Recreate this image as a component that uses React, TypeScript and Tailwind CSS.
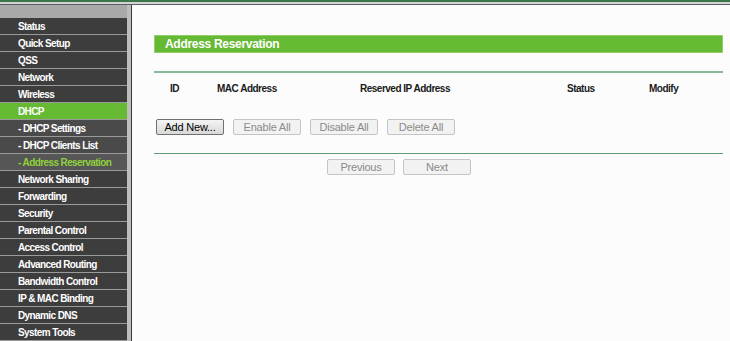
import React from "react";

type MenuItem = { label: string; kind?: "main" | "active" | "sub" | "subActive" };

const MENU: MenuItem[] = [
  { label: "Status" },
  { label: "Quick Setup" },
  { label: "QSS" },
  { label: "Network" },
  { label: "Wireless" },
  { label: "DHCP", kind: "active" },
  { label: "- DHCP Settings", kind: "sub" },
  { label: "- DHCP Clients List", kind: "sub" },
  { label: "- Address Reservation", kind: "subActive" },
  { label: "Network Sharing" },
  { label: "Forwarding" },
  { label: "Security" },
  { label: "Parental Control" },
  { label: "Access Control" },
  { label: "Advanced Routing" },
  { label: "Bandwidth Control" },
  { label: "IP & MAC Binding" },
  { label: "Dynamic DNS" },
  { label: "System Tools" },
];

const ITEM_STYLES: Record<NonNullable<MenuItem["kind"]>, string> = {
  main: "bg-[#3d3d3d] text-white",
  active: "bg-[#66b933] text-white",
  sub: "bg-[#4a4a4a] text-white",
  subActive: "bg-[#565656] text-[#8fd13c]",
};

function Button({ label, enabled }: { label: string; enabled?: boolean }) {
  return (
    <button
      className={
        enabled
          ? "w-[68px] h-[16px] text-[11px] leading-none tracking-[-0.2px] text-black border border-[#707070] rounded-[2px] bg-gradient-to-b from-[#f4f4f4] to-[#d8d8d8]"
          : "w-[68px] h-[16px] text-[11px] leading-none tracking-[-0.2px] text-[#8a8a8a] border border-[#c4c4c4] rounded-[2px] bg-[#f2f2f2]"
      }
    >
      {label}
    </button>
  );
}

export default function App() {
  return (
    <div className="w-[730px] h-[341px] overflow-hidden flex flex-col bg-[#fcfcfc] font-['Liberation_Sans',Arial,sans-serif]">
      {/* Top border */}
      <div className="h-[2px] bg-[#3c7648]" />
      <div className="h-[2px] bg-[#d4d4d4]" />
      <div className="h-px bg-[#5e5e5e]" />

      <div className="flex flex-1 min-h-0">
        {/* Sidebar */}
        <div className="w-[127px] bg-[#a9a9a9] pt-[13px] flex flex-col">
          {MENU.map((m) => (
            <div
              key={m.label}
              className={`h-[17px] border-b border-[#9a9a9a] flex items-center pl-[18px] text-[10px] tracking-[-0.6px] font-bold whitespace-nowrap ${ITEM_STYLES[m.kind ?? "main"]}`}
            >
              {m.label}
            </div>
          ))}
        </div>
        <div className="w-[4px] bg-[#bdbdbd]" />
        <div className="w-px bg-[#3a3a3a]" />

        {/* Content */}
        <div className="flex-1 pl-[22px] pr-[7px] pt-[30px]">
          <div className="h-[18px] bg-[#66b933] border border-[#8fd068] flex items-center pl-[10px] text-white text-[12px] tracking-[-0.3px] font-bold">
            Address Reservation
          </div>

          <div className="mt-[18px] h-[2px] bg-[#88b899]" />

          <div className="flex items-center h-[30px] text-[10px] tracking-[-0.5px] font-bold text-[#1a1a1a]">
            <span className="w-[63px] pl-[16px]">ID</span>
            <span className="w-[143px]">MAC Address</span>
            <span className="w-[207px]">Reserved IP Address</span>
            <span className="w-[82px]">Status</span>
            <span>Modify</span>
          </div>

          <div className="mt-[16px] flex gap-[9px] pl-[2px]">
            <Button label="Add New..." enabled />
            <Button label="Enable All" />
            <Button label="Disable All" />
            <Button label="Delete All" />
          </div>

          <div className="mt-[18px] h-px bg-[#5f9c6f]" />

          <div className="mt-[5px] flex gap-[8px] pl-[173px]">
            <Button label="Previous" />
            <Button label="Next" />
          </div>
        </div>
      </div>
    </div>
  );
}
